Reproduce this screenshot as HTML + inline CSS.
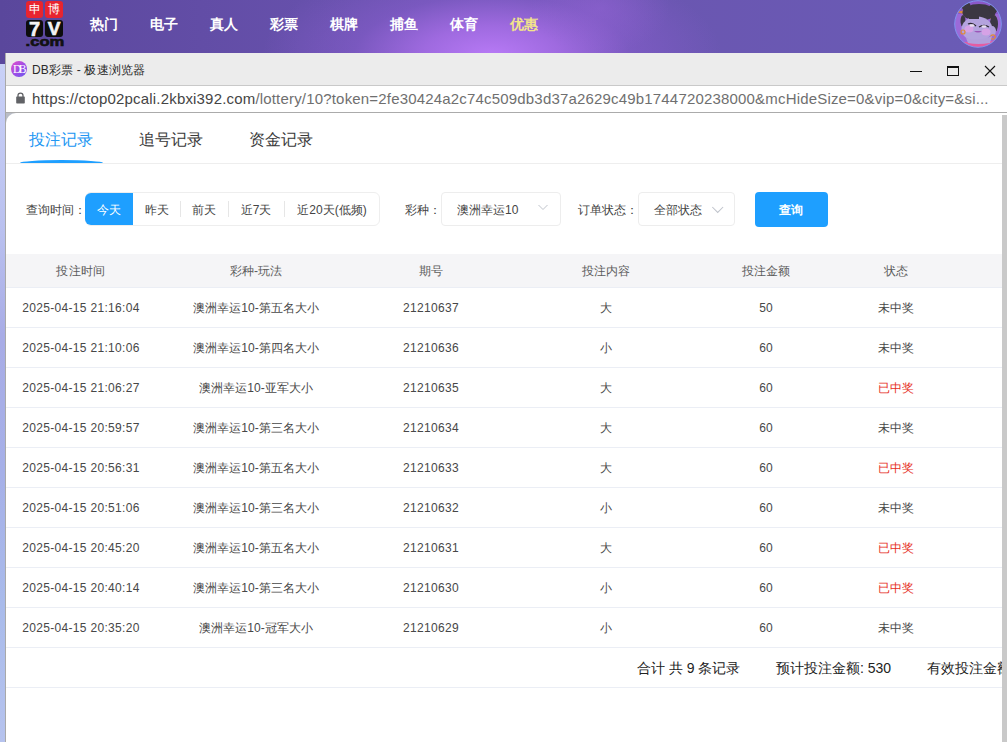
<!DOCTYPE html>
<html><head><meta charset="utf-8">
<style>
*{margin:0;padding:0;box-sizing:border-box;}
html,body{width:1007px;height:742px;overflow:hidden;background:#fff;font-family:"Liberation Sans",sans-serif;}
.abs{position:absolute;}
#top{position:absolute;left:0;top:0;width:1007px;height:64px;
 background:
 radial-gradient(ellipse 70px 45px at 600px 8px, rgba(150,100,215,0.45) 0%, rgba(130,90,200,0) 100%),
 radial-gradient(ellipse 230px 100px at 492px 56px, rgba(184,122,246,1) 0%, rgba(168,110,232,0.85) 30%, rgba(140,95,210,0.5) 60%, rgba(110,80,180,0) 100%),
 linear-gradient(90deg,#5a479c 0%,#6650ab 30%,#6a55b0 60%,#6a5cb6 100%);}
#leftstrip{position:absolute;left:0;top:64px;width:5px;height:678px;background:linear-gradient(180deg,#c9d1f7 0%,#b9c0ef 25%,#a8ace6 40%,#a6b0e8 60%,#a9bbeb 80%,#b6c3ee 100%);}
.nav{position:absolute;top:15px;color:#fff;font-size:14px;font-weight:bold;line-height:18px;}
#win{position:absolute;left:5px;top:53px;width:1002px;height:689px;background:#fff;border-left:1px solid #a9a9a9;}
#titlebar{position:absolute;left:0;top:0;width:1001px;height:33px;background:#ececec;border-bottom:1px solid #c9c9c9;}
#urlbar{position:absolute;left:0;top:33px;width:1001px;height:27px;background:#fff;border-bottom:1px solid #ababab;}
#content{position:absolute;left:0;top:60px;width:996px;height:629px;background:#fff;}
.t{position:absolute;white-space:nowrap;}

.seg{top:202px;font-size:12px;line-height:16px;color:#444;text-align:center;}
.div{top:201px;width:1px;height:16px;background:#e6e6e6;}
.row{position:absolute;left:6px;width:996px;height:40px;border-bottom:1px solid #ebeef5;overflow:hidden;}
.cell{position:absolute;top:0;height:100%;display:flex;align-items:center;justify-content:center;font-size:12px;color:#474747;white-space:nowrap;padding-top:1px;}
.head .cell{color:#5c5c5c;}
.c1{left:0;width:150px;letter-spacing:0.32px;}.c2{left:150px;width:200px;}.c3{left:350px;width:150px;letter-spacing:0.3px;}.c4{left:500px;width:200px;}.c5{left:700px;width:120px;}.c6{left:820px;width:140px;}
.win{color:#e62e24;}
.foot{top:12px;margin-left:-6px;font-size:14px;line-height:16px;color:#222;}
</style></head><body>
<div id="top"></div>
<div id="leftstrip"></div>
<!-- logo -->
<div class="abs" style="left:26px;top:1px;width:17px;height:17px;background:#e8242f;border-radius:3px;"></div>
<div class="abs" style="left:45px;top:1px;width:18px;height:17px;background:#e8242f;border-radius:3px;"></div>
<div class="abs" style="left:26px;top:1px;width:17px;height:17px;color:#fff;font-size:12px;line-height:17px;text-align:center;">申</div>
<div class="abs" style="left:45px;top:1px;width:18px;height:17px;color:#fff;font-size:12px;line-height:17px;text-align:center;">博</div>
<div class="abs" style="left:26px;top:20px;width:17px;height:17px;background:#0d0d0d;border-radius:3px;"></div>
<div class="abs" style="left:45px;top:20px;width:18px;height:17px;background:#0d0d0d;border-radius:3px;"></div>
<div class="abs" style="left:26px;top:19px;width:17px;height:18px;color:#f4f4f4;font-size:20px;font-weight:bold;line-height:20px;text-align:center;-webkit-text-stroke:0.6px #f4f4f4;">7</div>
<div class="abs" style="left:45px;top:19px;width:18px;height:18px;color:#f4f4f4;font-size:19px;font-weight:bold;line-height:20px;text-align:center;-webkit-text-stroke:0.6px #f4f4f4;">V</div>
<div class="abs" style="left:25px;top:36px;width:40px;height:12px;color:#111;font-size:13px;font-weight:bold;line-height:12px;text-align:center;transform:scaleX(1.28);-webkit-text-stroke:0.6px #111;">.com</div>

<div class="nav" style="left:90px">热门</div>
<div class="nav" style="left:150px">电子</div>
<div class="nav" style="left:210px">真人</div>
<div class="nav" style="left:270px">彩票</div>
<div class="nav" style="left:330px">棋牌</div>
<div class="nav" style="left:390px">捕鱼</div>
<div class="nav" style="left:450px">体育</div>
<div class="nav" style="left:510px;color:#f3e58a">优惠</div>

<!-- avatar -->
<svg class="abs" style="left:952px;top:0px" width="52" height="50" viewBox="0 0 52 50">
 <defs><clipPath id="cc"><circle cx="26" cy="24" r="23.3"/></clipPath></defs>
 <g clip-path="url(#cc)">
  <rect x="0" y="0" width="52" height="50" fill="#9b6ad8"/>
  <rect x="0" y="0" width="52" height="14" fill="#8a58c8"/>
  <path d="M30 12 L44 16 L40 20Z" fill="#e39a4a"/>
  <path d="M4 12 L14 10 L12 14Z" fill="#d98a40"/>
  <ellipse cx="27" cy="12.5" rx="16.5" ry="8.5" fill="#3b3742"/>
  <circle cx="14" cy="6" r="4.5" fill="#3d3840"/>
  <circle cx="41" cy="9" r="4.5" fill="#3a3640"/>
  <ellipse cx="42" cy="24" rx="4" ry="9" fill="#3b3742"/><ellipse cx="11" cy="21" rx="2.5" ry="6" fill="#3b3742"/>
  <ellipse cx="25" cy="29" rx="15.5" ry="12.5" fill="#b4a3de"/>
  <rect x="17" y="13" width="10" height="6" fill="#3b3742"/>
  <ellipse cx="40" cy="31" rx="4" ry="5" fill="#b2a0dc"/>
  <ellipse cx="17" cy="29" rx="4.5" ry="3.5" fill="#d6a2e6"/>
  <ellipse cx="34" cy="32" rx="4.5" ry="3.5" fill="#d6a2e6"/>
  <path d="M16 24 Q20 22 24 26" stroke="#2c2830" stroke-width="1.3" fill="none"/>
  <path d="M27 27 Q32 24 37 27" stroke="#2c2830" stroke-width="1.3" fill="none"/>
  <ellipse cx="20" cy="25.5" rx="2.5" ry="1.3" fill="#e9e0f0"/>
  <ellipse cx="32" cy="26.5" rx="2.5" ry="1.3" fill="#e9e0f0"/>
  <path d="M22 31 Q26 34 30 31Z" fill="#9b55b8"/>
  <circle cx="11" cy="32" r="2" fill="none" stroke="#e08a38" stroke-width="1.2"/>
  <circle cx="41" cy="37" r="2.2" fill="none" stroke="#e08a38" stroke-width="1.2"/>
  <path d="M0 40 Q26 46 52 38 L52 50 L0 50Z" fill="#e45ca2"/>
  <path d="M14 38 Q26 42 40 36 L38 43 Q26 45 16 43Z" fill="#b2a0dc"/>
 </g>
 <circle cx="26" cy="24" r="23.3" fill="none" stroke="#7f95f0" stroke-width="1"/>
</svg>

<div id="win">
 <div id="titlebar">
  <div class="abs" style="left:5px;top:8px;width:16px;height:16px;border-radius:50%;background:linear-gradient(135deg,#d84ed0 10%,#9a4ee8 55%,#6a58ec 100%);"></div>
  <div class="abs" style="left:6px;top:8px;width:15px;height:16px;color:#fff;font-family:'Liberation Serif',serif;font-size:11.5px;line-height:16px;text-align:center;letter-spacing:-2.6px;text-indent:-2px;">DB</div>
  <div class="t" style="left:26px;top:9px;font-size:12px;line-height:16px;color:#2a2a2a;letter-spacing:0.15px;">DB彩票 - 极速浏览器</div>
  <div class="abs" style="left:904px;top:18px;width:12px;height:1px;background:#111;"></div>
  <div class="abs" style="left:941px;top:13px;width:12px;height:10px;border:1px solid #111;border-top-width:2px;"></div>
  <svg class="abs" style="left:978px;top:12px" width="12" height="12" viewBox="0 0 12 12"><path d="M1 1L11 11M11 1L1 11" stroke="#111" stroke-width="1.1"/></svg>
 </div>
 <div id="urlbar">
  <svg class="abs" style="left:10px;top:6px" width="10" height="12" viewBox="0 0 10 12"><path d="M2 5V3.6A2.5 2.5 0 0 1 7 3.6V5" fill="none" stroke="#616266" stroke-width="1.3"/><rect x="0.2" y="4.4" width="8.6" height="7" rx="0.7" fill="#616266"/></svg>
  <div class="t" style="left:26px;top:4px;font-size:15px;line-height:18px;color:#6f6f6f;letter-spacing:0.18px;"><span style="color:#454545">https://ctop02pcali.2kbxi392.com</span>/lottery/10?token=2fe30424a2c74c509db3d37a2629c49b1744720238000&amp;mcHideSize=0&amp;vip=0&amp;city=&amp;si...</div>
 </div>
</div>

<!-- content area -->
<div class="abs" style="left:6px;top:113px;width:12px;height:12px;background:#b9bdc6;"></div>
<div class="abs" style="left:6px;top:113px;width:996px;height:629px;background:#fff;border-top-left-radius:10px;"></div>
<div id="scroll" class="abs" style="left:1002px;top:115px;width:5px;height:627px;background:#c9c9c9;"></div>
<!-- tabs -->
<div class="t" style="left:29px;top:130px;font-size:16px;line-height:20px;color:#2196f3;">投注记录</div>
<div class="t" style="left:139px;top:130px;font-size:16px;line-height:20px;color:#3a3a3a;">追号记录</div>
<div class="t" style="left:249px;top:130px;font-size:16px;line-height:20px;color:#3a3a3a;">资金记录</div>
<div class="abs" style="left:6px;top:163px;width:996px;height:1px;background:#eeeeee;"></div>
<div class="abs" style="left:20px;top:160px;width:83px;height:3px;background:#1e9fff;border-radius:50%/100% 100% 0 0;"></div>
<!-- filters -->
<div class="t" style="left:26px;top:202px;font-size:12px;line-height:16px;color:#444;">查询时间：</div>
<div class="abs" style="left:85px;top:192px;width:295px;height:34px;border:1px solid #eeeeee;border-radius:6px;"></div>
<div class="abs" style="left:85px;top:193px;width:48px;height:32px;background:#1e9fff;border-radius:6px 0 0 6px;"></div>
<div class="t seg" style="left:85px;width:48px;color:#fff;">今天</div>
<div class="t seg" style="left:133px;width:47px;">昨天</div>
<div class="abs div" style="left:180px;"></div>
<div class="t seg" style="left:180px;width:48px;">前天</div>
<div class="abs div" style="left:228px;"></div>
<div class="t seg" style="left:228px;width:56px;">近7天</div>
<div class="abs div" style="left:284px;"></div>
<div class="t seg" style="left:284px;width:96px;">近20天(低频)</div>

<div class="t" style="left:405px;top:202px;font-size:12px;line-height:16px;color:#444;">彩种：</div>
<div class="abs" style="left:441px;top:192px;width:120px;height:34px;border:1px solid #ededed;border-radius:4px;"></div>
<div class="t" style="left:457px;top:202px;font-size:12px;line-height:16px;color:#444;">澳洲幸运10</div>
<svg class="abs" style="left:537px;top:203px" width="12" height="9" viewBox="0 0 12 9"><polyline points="1.5,2 6,6.5 10.5,2" fill="none" stroke="#c0c4cc" stroke-width="1"/></svg>

<div class="t" style="left:578px;top:202px;font-size:12px;line-height:16px;color:#444;">订单状态：</div>
<div class="abs" style="left:638px;top:192px;width:97px;height:34px;border:1px solid #ededed;border-radius:4px;"></div>
<div class="t" style="left:654px;top:202px;font-size:12px;line-height:16px;color:#444;">全部状态</div>
<svg class="abs" style="left:711px;top:205px" width="14" height="10" viewBox="0 0 14 10"><polyline points="1.3,2 6.7,7.4 12.1,2" fill="none" stroke="#c0c4cc" stroke-width="1.05"/></svg>

<div class="abs" style="left:755px;top:192px;width:73px;height:35px;background:#1e9fff;border-radius:4px;"></div>
<div class="t" style="left:755px;top:202px;width:73px;text-align:center;font-size:12px;line-height:16px;color:#fff;font-weight:bold;text-indent:-1px;">查询</div>

<!-- table -->
<div class="row head" style="top:254px;height:34px;background:#f5f5f7;">
<div class="cell c1">投注时间</div><div class="cell c2">彩种-玩法</div><div class="cell c3">期号</div><div class="cell c4">投注内容</div><div class="cell c5">投注金额</div><div class="cell c6">状态</div>
</div>
<div class="row" style="top:288px">
<div class="cell c1">2025-04-15 21:16:04</div>
<div class="cell c2">澳洲幸运10-第五名大小</div>
<div class="cell c3">21210637</div>
<div class="cell c4">大</div>
<div class="cell c5">50</div>
<div class="cell c6">未中奖</div>
</div>
<div class="row" style="top:328px">
<div class="cell c1">2025-04-15 21:10:06</div>
<div class="cell c2">澳洲幸运10-第四名大小</div>
<div class="cell c3">21210636</div>
<div class="cell c4">小</div>
<div class="cell c5">60</div>
<div class="cell c6">未中奖</div>
</div>
<div class="row" style="top:368px">
<div class="cell c1">2025-04-15 21:06:27</div>
<div class="cell c2">澳洲幸运10-亚军大小</div>
<div class="cell c3">21210635</div>
<div class="cell c4">大</div>
<div class="cell c5">60</div>
<div class="cell c6 win">已中奖</div>
</div>
<div class="row" style="top:408px">
<div class="cell c1">2025-04-15 20:59:57</div>
<div class="cell c2">澳洲幸运10-第三名大小</div>
<div class="cell c3">21210634</div>
<div class="cell c4">大</div>
<div class="cell c5">60</div>
<div class="cell c6">未中奖</div>
</div>
<div class="row" style="top:448px">
<div class="cell c1">2025-04-15 20:56:31</div>
<div class="cell c2">澳洲幸运10-第五名大小</div>
<div class="cell c3">21210633</div>
<div class="cell c4">大</div>
<div class="cell c5">60</div>
<div class="cell c6 win">已中奖</div>
</div>
<div class="row" style="top:488px">
<div class="cell c1">2025-04-15 20:51:06</div>
<div class="cell c2">澳洲幸运10-第三名大小</div>
<div class="cell c3">21210632</div>
<div class="cell c4">小</div>
<div class="cell c5">60</div>
<div class="cell c6">未中奖</div>
</div>
<div class="row" style="top:528px">
<div class="cell c1">2025-04-15 20:45:20</div>
<div class="cell c2">澳洲幸运10-第五名大小</div>
<div class="cell c3">21210631</div>
<div class="cell c4">大</div>
<div class="cell c5">60</div>
<div class="cell c6 win">已中奖</div>
</div>
<div class="row" style="top:568px">
<div class="cell c1">2025-04-15 20:40:14</div>
<div class="cell c2">澳洲幸运10-第三名大小</div>
<div class="cell c3">21210630</div>
<div class="cell c4">小</div>
<div class="cell c5">60</div>
<div class="cell c6 win">已中奖</div>
</div>
<div class="row" style="top:608px">
<div class="cell c1">2025-04-15 20:35:20</div>
<div class="cell c2">澳洲幸运10-冠军大小</div>
<div class="cell c3">21210629</div>
<div class="cell c4">小</div>
<div class="cell c5">60</div>
<div class="cell c6">未中奖</div>
</div>
<div class="row" style="top:648px;">
<div class="t foot" style="left:637px;">合计 共 9 条记录</div>
<div class="t foot" style="left:776px;">预计投注金额: 530</div>
<div class="t foot" style="left:927px;">有效投注金额: 530</div>
</div>
</body></html>
